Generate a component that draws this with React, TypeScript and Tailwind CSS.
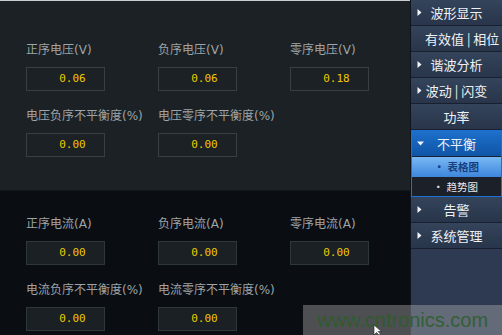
import type { ReactNode } from "react";

type Field = { label: string; value: string };

const voltage: Field[] = [
  { label: "正序电压(V)", value: "0.06" },
  { label: "负序电压(V)", value: "0.06" },
  { label: "零序电压(V)", value: "0.18" },
  { label: "电压负序不平衡度(%)", value: "0.00" },
  { label: "电压零序不平衡度(%)", value: "0.00" },
];

const current: Field[] = [
  { label: "正序电流(A)", value: "0.00" },
  { label: "负序电流(A)", value: "0.00" },
  { label: "零序电流(A)", value: "0.00" },
  { label: "电流负序不平衡度(%)", value: "0.00" },
  { label: "电流零序不平衡度(%)", value: "0.00" },
];

const cjk = { fontFamily: '"Noto Sans CJK SC", "Noto Sans", sans-serif' };
const label = { fontFamily: '"DejaVu Sans", "Noto Sans CJK SC", sans-serif' };
const mono = { fontFamily: '"DejaVu Sans Mono", "Liberation Mono", monospace' };

function FieldGrid({ fields, boxClass }: { fields: Field[]; boxClass: string }) {
  return (
    <div className="grid grid-cols-[132px_132px_132px] gap-y-[17px] pl-[26px]">
      {fields.map((f) => (
        <div key={f.label} className="flex flex-col">
          <span
            className="h-4 whitespace-nowrap text-[12px] leading-4 text-[#9ea4a7]"
            style={label}
          >
            {f.label}
          </span>
          <div
            className={`mt-[9px] flex h-[24px] w-[79px] items-center justify-center pl-[14px] text-[11px] text-[#f0c800] ${boxClass}`}
            style={mono}
          >
            {f.value}
          </div>
        </div>
      ))}
    </div>
  );
}

function Arrow({ down }: { down?: boolean }) {
  return down ? (
    <svg width="7" height="5" viewBox="0 0 7 5">
      <path d="M0 0.5 L7 0.5 L3.5 4.5 Z" fill="#f2f4f8" />
    </svg>
  ) : (
    <svg width="5" height="7" viewBox="0 0 5 7">
      <path d="M0.5 0 L4.5 3.5 L0.5 7 Z" fill="#f2f4f8" />
    </svg>
  );
}

function MenuItem({
  children,
  arrow,
  className = "",
}: {
  children: ReactNode;
  arrow?: "right" | "down";
  className?: string;
}) {
  return (
    <div
      className={`grid h-[26px] grid-cols-[14px_1fr_14px] items-center border-b border-[#182030] ${
        className || "bg-gradient-to-b from-[#34445b] to-[#28354a]"
      }`}
    >
      <span className="flex justify-center pl-[2px]">
        {arrow && <Arrow down={arrow === "down"} />}
      </span>
      <span
        className="whitespace-nowrap text-center text-[13px] leading-none text-[#eef1f5]"
        style={cjk}
      >
        {children}
      </span>
      <span />
    </div>
  );
}

export default function App() {
  return (
    <div className="relative flex h-[335px] w-[502px] overflow-hidden bg-[#0a0d12]">
      <div className="flex w-[410px] flex-col">
        <section className="h-[190px] border-t border-[#c9cdce] bg-[#1b2124] pt-[41px]">
          <FieldGrid fields={voltage} boxClass="border border-[#383f43] bg-[#1b2124]" />
        </section>
        <section className="flex-1 border-t border-[#12171a] bg-[#0a0d12] pt-[25px]">
          <FieldGrid fields={current} boxClass="border border-[#2e3739] bg-[#1a2023]" />
        </section>
      </div>

      <nav className="flex w-[92px] flex-col border-l border-[#10151d] bg-[#2e3a51]">
        <MenuItem arrow="right">波形显示</MenuItem>
        <MenuItem>有效值 | 相位</MenuItem>
        <MenuItem arrow="right">谐波分析</MenuItem>
        <MenuItem arrow="right">波动 | 闪变</MenuItem>
        <MenuItem>功率</MenuItem>
        <div className="border border-[#1d6fd2]">
          <MenuItem
            arrow="down"
            className="h-[25px] border-[#0d3f80] bg-gradient-to-b from-[#1d70cc] to-[#0f55a6]"
          >
            不平衡
          </MenuItem>
          <div
            className="flex h-[20px] items-center gap-[3px] bg-gradient-to-b from-[#78b8f4] to-[#3d86dc] pl-[22px] text-[10.5px] font-bold text-[#17407c]"
            style={cjk}
          >
            <span>·</span>
            <span>表格图</span>
          </div>
          <div
            className="flex h-[19px] items-center gap-[3px] bg-[#1b2029] pl-[21px] text-[10.5px] text-[#e6e8ec]"
            style={cjk}
          >
            <span>·</span>
            <span>趋势图</span>
          </div>
        </div>
        <MenuItem arrow="right">告警</MenuItem>
        <MenuItem arrow="right">系统管理</MenuItem>
      </nav>

      <div className="pointer-events-none absolute bottom-0 right-0 flex h-[30px] w-[199px] items-center bg-[#b4b4b4]/40 pl-[14px]">
        <span
          className="text-[20px] leading-none text-[#2a5e28]/85"
          style={{ fontFamily: '"Liberation Sans", Arial, sans-serif' }}
        >
          www.cntronics.com
        </span>
      </div>
      <svg
        className="pointer-events-none absolute left-[373px] top-[324px]"
        width="10"
        height="12"
        viewBox="0 0 10 12"
      >
        <path d="M1 1 L1 11 L3.5 8.5 L6 11 L7.5 10 L5 7.5 L8.5 7.5 Z" fill="#ffffff" stroke="#222" strokeWidth="0.6" />
      </svg>
    </div>
  );
}
